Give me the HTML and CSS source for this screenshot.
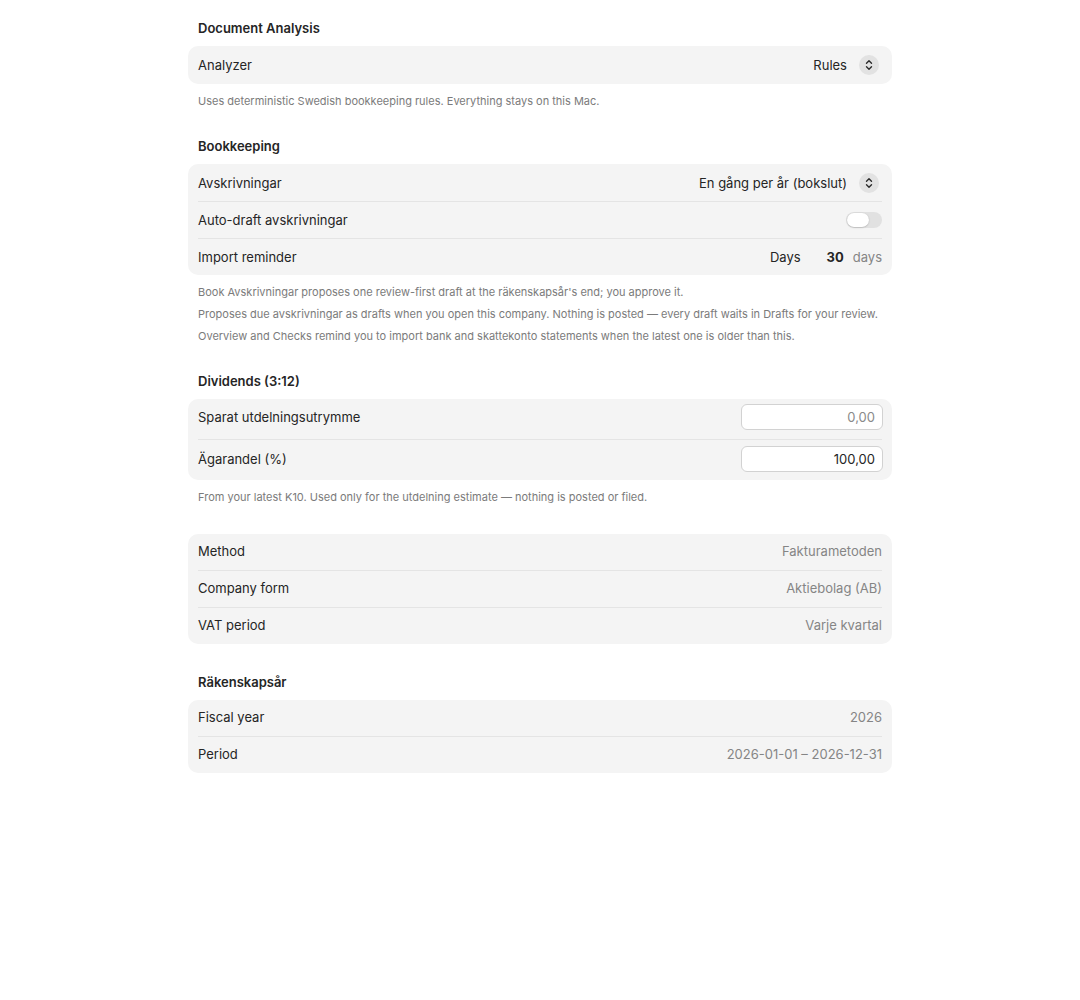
FILE: index.html
```html
<!DOCTYPE html>
<html lang="sv">
<head>
    <meta charset="UTF-8">
    <meta name="viewport" content="width=device-width, initial-scale=1.0">
    <title>Settings</title>
    <link rel="stylesheet" href="styles.css">
</head>
<body>
    <main class="form">
        <!-- Document Analysis -->
        <section class="group">
            <h2 class="group-title">Document Analysis</h2>
            <div class="card">
                <div class="row row-tall">
                    <span class="label">Analyzer</span>
                    <span class="popup">
                        <span class="popup-value">Rules</span>
                        <span class="stepper">
                            <svg width="10" height="12" viewBox="0 0 10 12" fill="none" stroke="#2a2a2a" stroke-width="1.4" stroke-linecap="round" stroke-linejoin="round"><path d="M2.5 4.3 5 1.8l2.5 2.5M2.5 7.7 5 10.2l2.5-2.5"/></svg>
                        </span>
                    </span>
                </div>
            </div>
            <p class="caption">Uses deterministic Swedish bookkeeping rules. Everything stays on this Mac.</p>
        </section>

        <!-- Bookkeeping -->
        <section class="group">
            <h2 class="group-title">Bookkeeping</h2>
            <div class="card">
                <div class="row">
                    <span class="label">Avskrivningar</span>
                    <span class="popup">
                        <span class="popup-value">En gång per år (bokslut)</span>
                        <span class="stepper">
                            <svg width="10" height="12" viewBox="0 0 10 12" fill="none" stroke="#2a2a2a" stroke-width="1.4" stroke-linecap="round" stroke-linejoin="round"><path d="M2.5 4.3 5 1.8l2.5 2.5M2.5 7.7 5 10.2l2.5-2.5"/></svg>
                        </span>
                    </span>
                </div>
                <div class="row">
                    <span class="label">Auto-draft avskrivningar</span>
                    <span class="toggle"><span class="knob"></span></span>
                </div>
                <div class="row">
                    <span class="label">Import reminder</span>
                    <span class="days">
                        <span class="days-label">Days</span>
                        <span class="days-num">30</span>
                        <span class="days-unit">days</span>
                    </span>
                </div>
            </div>
            <div class="captions">
                <p class="caption">Book Avskrivningar proposes one review-first draft at the räkenskapsår's end; you approve it.</p>
                <p class="caption">Proposes due avskrivningar as drafts when you open this company. Nothing is posted — every draft waits in Drafts for your review.</p>
                <p class="caption">Overview and Checks remind you to import bank and skattekonto statements when the latest one is older than this.</p>
            </div>
        </section>

        <!-- Dividends -->
        <section class="group">
            <h2 class="group-title">Dividends (3:12)</h2>
            <div class="card">
                <div class="row row-field">
                    <span class="label">Sparat utdelningsutrymme</span>
                    <input class="field placeholder" type="text" placeholder="0,00">
                </div>
                <div class="row row-field">
                    <span class="label">Ägarandel (%)</span>
                    <input class="field" type="text" value="100,00">
                </div>
            </div>
            <p class="caption">From your latest K10. Used only for the utdelning estimate — nothing is posted or filed.</p>
        </section>

        <!-- Company -->
        <section class="group">
            <div class="card card-compact">
                <div class="row">
                    <span class="label">Method</span>
                    <span class="value">Fakturametoden</span>
                </div>
                <div class="row">
                    <span class="label">Company form</span>
                    <span class="value">Aktiebolag (AB)</span>
                </div>
                <div class="row">
                    <span class="label">VAT period</span>
                    <span class="value">Varje kvartal</span>
                </div>
            </div>
        </section>

        <!-- Räkenskapsår -->
        <section class="group">
            <h2 class="group-title">Räkenskapsår</h2>
            <div class="card card-compact">
                <div class="row">
                    <span class="label">Fiscal year</span>
                    <span class="value">2026</span>
                </div>
                <div class="row">
                    <span class="label">Period</span>
                    <span class="value">2026-01-01 – 2026-12-31</span>
                </div>
            </div>
        </section>
    </main>
</body>
</html>
```

FILE: styles.css
```css
/* base */
:root {
    --text: #252525;
    --muted: #858585;
    --caption: #7b7b7b;
    --card-bg: #f4f4f4;
    --line: #e4e4e4;
    --radius: 10px;
}

* {
    margin: 0;
    padding: 0;
    box-sizing: border-box;
}

body {
    font-family: Inter, "Noto Sans", sans-serif;
    font-size: 13px;
    color: var(--text);
    background: #fff;
}

/* layout */
.form {
    width: 704px;
    margin: 0 auto;
    padding-top: 20px;
}

.group + .group {
    margin-top: 30px;
}

.group-title {
    font-size: 13px;
    font-weight: 600;
    line-height: 16px;
    padding: 0 10px;
    margin-bottom: 10px;
}

/* card with rows */
.card {
    background: var(--card-bg);
    border-radius: var(--radius);
    padding: 0 10px;
}

.row {
    display: flex;
    align-items: center;
    justify-content: space-between;
    height: 37px;
}

.row + .row {
    border-top: 1px solid var(--line);
}

.card-compact .row {
    padding-bottom: 2px;
}

.card-compact .row:first-child {
    height: 36px;
}

.row-tall {
    height: 38px;
}

.row-field {
    height: 40px;
    padding-bottom: 4px;
}

.row + .row-field {
    height: 41px;
    padding-bottom: 2px;
}

.label {
    line-height: 16px;
}

.value {
    color: var(--muted);
}

/* popup button */
.popup {
    display: flex;
    align-items: center;
    gap: 12px;
    margin-right: 3px;
}

.stepper {
    width: 20px;
    height: 20px;
    border-radius: 50%;
    background: #e2e2e2;
    display: flex;
    align-items: center;
    justify-content: center;
}

.stepper svg {
    display: block;
}

/* toggle */
.toggle {
    width: 36px;
    height: 16px;
    border-radius: 8px;
    background: #e1e1e1;
    padding: 1px;
    display: flex;
}

.knob {
    width: 22px;
    height: 14px;
    border-radius: 7px;
    background: #fff;
    box-shadow: 0 0.5px 1.5px rgba(0, 0, 0, 0.25);
}

/* days stepper */
.days {
    display: flex;
    align-items: baseline;
}

.days-num {
    font-weight: 700;
    margin: 0 9px 0 26px;
}

.days-unit {
    color: var(--muted);
}

/* text fields */
.field {
    width: 142px;
    height: 26px;
    border: 1px solid #d2d2d2;
    border-radius: 6px;
    background: #fff;
    font: inherit;
    color: var(--text);
    text-align: right;
    padding: 0 7px;
    outline: none;
    margin-right: -1px;
}

.field::placeholder {
    color: #8a8a8a;
}

/* captions */
.caption {
    font-size: 11px;
    line-height: 14px;
    color: var(--caption);
    padding: 0 10px;
    margin-top: 10px;
}

.captions .caption + .caption {
    margin-top: 8px;
}
```
